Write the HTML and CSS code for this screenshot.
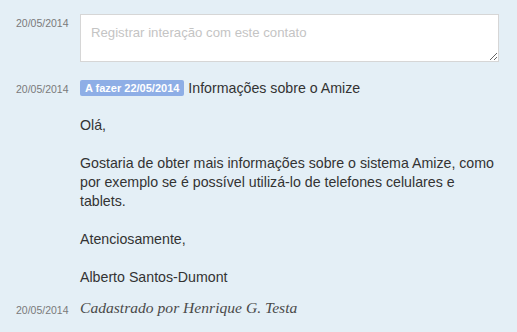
FILE: index.html
```html
<!DOCTYPE html>
<html lang="pt-BR">
<head>
    <meta charset="UTF-8">
    <title>Interações</title>
    <link rel="stylesheet" href="styles.css">
</head>
<body>
    <div class="timeline">
        <div class="entry">
            <span class="date">20/05/2014</span>
            <textarea class="note" placeholder="Registrar interação com este contato"></textarea>
        </div>

        <div class="entry">
            <span class="date">20/05/2014</span>
            <div class="content">
                <div class="title">
                    <span class="badge">A fazer 22/05/2014</span>
                    Informações sobre o Amize
                </div>
                <div class="message">
                    <p>Olá,</p>
                    <p>Gostaria de obter mais informações sobre o sistema Amize, como por exemplo se é possível utilizá-lo de telefones celulares e tablets.</p>
                    <p>Atenciosamente,</p>
                    <p>Alberto Santos-Dumont</p>
                </div>
            </div>
        </div>

        <div class="entry">
            <span class="date">20/05/2014</span>
            <div class="author">Cadastrado por Henrique G. Testa</div>
        </div>
    </div>
</body>
</html>
```

FILE: styles.css
```css
body {
    margin: 0;
    background-color: #e4eff6;
    font-family: "Liberation Sans", Arial, sans-serif;
    color: #333;
}
.timeline {
    padding: 14px 18px 0 16px;
}
.entry {
    display: grid;
    grid-template-columns: 64px 1fr;
    margin-bottom: 18px;
}
.date {
    font-size: 10.5px;
    color: #7a7a7a;
    padding-top: 3px;
}
.note {
    height: 48px;
    box-sizing: border-box;
    margin: 0;
    padding: 10px 10px;
    border: 1px solid #d6d6d6;
    border-radius: 0;
    background-color: #fff;
    font-family: "Liberation Sans", Arial, sans-serif;
    font-size: 13.2px;
    resize: vertical;
}
.note::placeholder {
    color: #c4c4c4;
}
.title {
    font-size: 14.2px;
    line-height: 18px;
    margin-top: -1px;
}
.badge {
    display: inline-block;
    background-color: #8eaee6;
    color: #fff;
    font-size: 11px;
    font-weight: bold;
    line-height: 16px;
    padding: 0 5px;
    border-radius: 2px;
    vertical-align: 1px;
}
.message {
    font-size: 14.2px;
    line-height: 19px;
    padding-top: 19px;
}
.message p {
    margin: 0 0 19px;
}
.message p:last-child {
    margin-bottom: 0;
}
.entry:nth-child(2) {
    margin-bottom: 12px;
}
.entry:last-child .date {
    padding-top: 5px;
}
.author {
    font-family: "Liberation Serif", Georgia, serif;
    font-style: italic;
    font-size: 15.6px;
    color: #4a4a4a;
}
```
